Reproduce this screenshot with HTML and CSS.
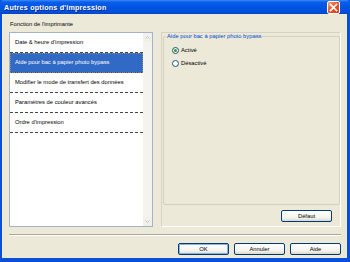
FILE: index.html
```html
<!DOCTYPE html>
<html lang="fr">

<head>
    <meta charset="UTF-8">
    <title>Autres options d'impression</title>
    <link rel="stylesheet" href="styles.css">
</head>

<body>

    <div class="window">

        <!-- Title bar -->
        <div class="titlebar">
            <span class="title">Autres options d'impression</span>
            <span class="close">
                <svg width="9" height="9" viewBox="0 0 9 9">
                    <path d="M1.5 1.5 L7.5 7.5 M7.5 1.5 L1.5 7.5" stroke="#fff" stroke-width="1.6" stroke-linecap="square"/>
                </svg>
            </span>
        </div>

        <div class="content">
            <div class="caption">Fonction de l'imprimante</div>

            <div class="main">

                <!-- Function list -->
                <div class="listbox">
                    <ul class="items">
                        <li class="item">Date &amp; heure d'impression</li>
                        <li class="item selected">Aide pour bac à papier photo bypass</li>
                        <li class="item">Modifier le mode de transfert des données</li>
                        <li class="item">Paramètres de couleur avancés</li>
                        <li class="item">Ordre d'impression</li>
                    </ul>
                    <div class="scrollbar">
                        <span class="arrow">
                            <svg width="7" height="7" viewBox="0 0 7 7"><path d="M1.5 4.5 L3.5 2.5 L5.5 4.5" fill="none" stroke="#c2c2b8" stroke-width="1"/></svg>
                        </span>
                        <span class="track"></span>
                        <span class="arrow">
                            <svg width="7" height="7" viewBox="0 0 7 7"><path d="M1.5 2.5 L3.5 4.5 L5.5 2.5" fill="none" stroke="#c2c2b8" stroke-width="1"/></svg>
                        </span>
                    </div>
                </div>

                <!-- Settings panel -->
                <div class="panel">
                    <fieldset class="group">
                        <legend>Aide pour bac à papier photo bypass</legend>
                        <label class="radio"><span class="dot on"></span>Activé</label>
                        <label class="radio"><span class="dot"></span>Désactivé</label>
                    </fieldset>
                    <div class="panel-footer">
                        <button class="btn">Défaut</button>
                    </div>
                </div>

            </div>

            <div class="separator"></div>

            <div class="buttons">
                <button class="btn default">OK</button>
                <button class="btn">Annuler</button>
                <button class="btn">Aide</button>
            </div>
        </div>

    </div>

</body>

</html>
```

FILE: styles.css
```css
html, body {
    margin: 0;
    padding: 0;
}

body {
    font-family: "Liberation Sans", Arial, sans-serif;
    font-size: 5.8px;
    color: #000;
}

.window {
    width: 350px;
    height: 262px;
    box-sizing: border-box;
    background: #0a4fd8;
    padding: 0 3px 4px 2px;
    display: flex;
    flex-direction: column;
}

.titlebar {
    height: 14px;
    margin: 0 -3px 0 -2px;
    padding: 0 10px 0 4px;
    background: linear-gradient(#3d8af7 0%, #0a5ee9 15%, #0054e3 50%, #0050d8 85%, #0144c8 100%);
    display: flex;
    align-items: center;
    justify-content: space-between;
    border-radius: 4px 4px 0 0;
}

.title {
    color: #fff;
    font-weight: bold;
    font-size: 7.2px;
    letter-spacing: 0.2px;
    text-shadow: 1px 1px 0 #0a2a8a;
}

.close {
    width: 13px;
    height: 13px;
    box-sizing: border-box;
    border: 1px solid #fff;
    border-radius: 2px;
    background: linear-gradient(135deg, #f5a07a, #e8582c 45%, #d8401a);
    display: flex;
    align-items: center;
    justify-content: center;
}

.close svg {
    display: block;
}

.content {
    flex: 1;
    background: #ece9d8;
    padding: 0 6px 0 7px;
    display: flex;
    flex-direction: column;
}

.caption {
    height: 18px;
    line-height: 20px;
    padding-left: 1px;
}

.main {
    display: flex;
    gap: 8px;
    height: 195px;
}

.listbox {
    width: 144px;
    box-sizing: border-box;
    border: 1px solid #a5b3c8;
    background: #fff;
    display: flex;
}

.items {
    flex: 1;
    list-style: none;
    margin: 0;
    padding: 0;
}

.item {
    height: 19px;
    line-height: 19px;
    padding-left: 5px;
    border-bottom: 1px dashed #444;
    white-space: nowrap;
}

.item.selected {
    background: #316ac5;
    color: #fff;
    outline: 1px dotted #888;
    outline-offset: -1px;
}

.scrollbar {
    width: 9px;
    background: #f4f3ee;
    display: flex;
    flex-direction: column;
}

.arrow {
    height: 9px;
    background: #f1f0ea;
    display: flex;
    align-items: center;
    justify-content: center;
}

.track {
    flex: 1;
}

.panel {
    flex: 1;
    box-sizing: border-box;
    border: 1px solid #d6d3c6;
    border-right-color: #fff;
    border-bottom-color: #fff;
    display: flex;
    flex-direction: column;
    padding: 0 0 0 1px;
}

.group {
    margin: 0;
    height: 172px;
    box-sizing: border-box;
    border: 1px solid #d0d0bf;
    border-radius: 2px;
    padding: 7px 0 0 8px;
    display: flex;
    flex-direction: column;
    gap: 5px;
}

.group legend {
    color: #0046d5;
    padding: 0 1px;
    margin-left: -6px;
}

.radio {
    display: flex;
    align-items: center;
    gap: 2px;
    height: 8px;
}

.dot {
    width: 7px;
    height: 7px;
    box-sizing: border-box;
    border: 1px solid #1c5180;
    border-radius: 50%;
    background: #fff;
    display: flex;
    align-items: center;
    justify-content: center;
}

.dot.on::after {
    content: "";
    width: 3px;
    height: 3px;
    border-radius: 50%;
    background: #21a121;
}

.panel-footer {
    flex: 1;
    display: flex;
    align-items: center;
    justify-content: flex-end;
    padding-right: 8px;
}

.btn {
    font-family: "Liberation Sans", Arial, sans-serif;
    font-size: 5.8px;
    color: #000;
    width: 51px;
    height: 12px;
    padding: 0;
    box-sizing: border-box;
    border: 1px solid #003c74;
    border-radius: 2px;
    background: linear-gradient(#fff, #f4f3ee 70%, #d8d5c8);
}

.btn.default {
    box-shadow: inset 0 0 0 1px #8db2e3;
}

.separator {
    margin-top: 7px;
    border-top: 1px solid #aca899;
    border-bottom: 1px solid #fff;
    height: 0;
}

.buttons {
    display: flex;
    justify-content: flex-end;
    gap: 5px;
    margin-top: 7px;
}
```
